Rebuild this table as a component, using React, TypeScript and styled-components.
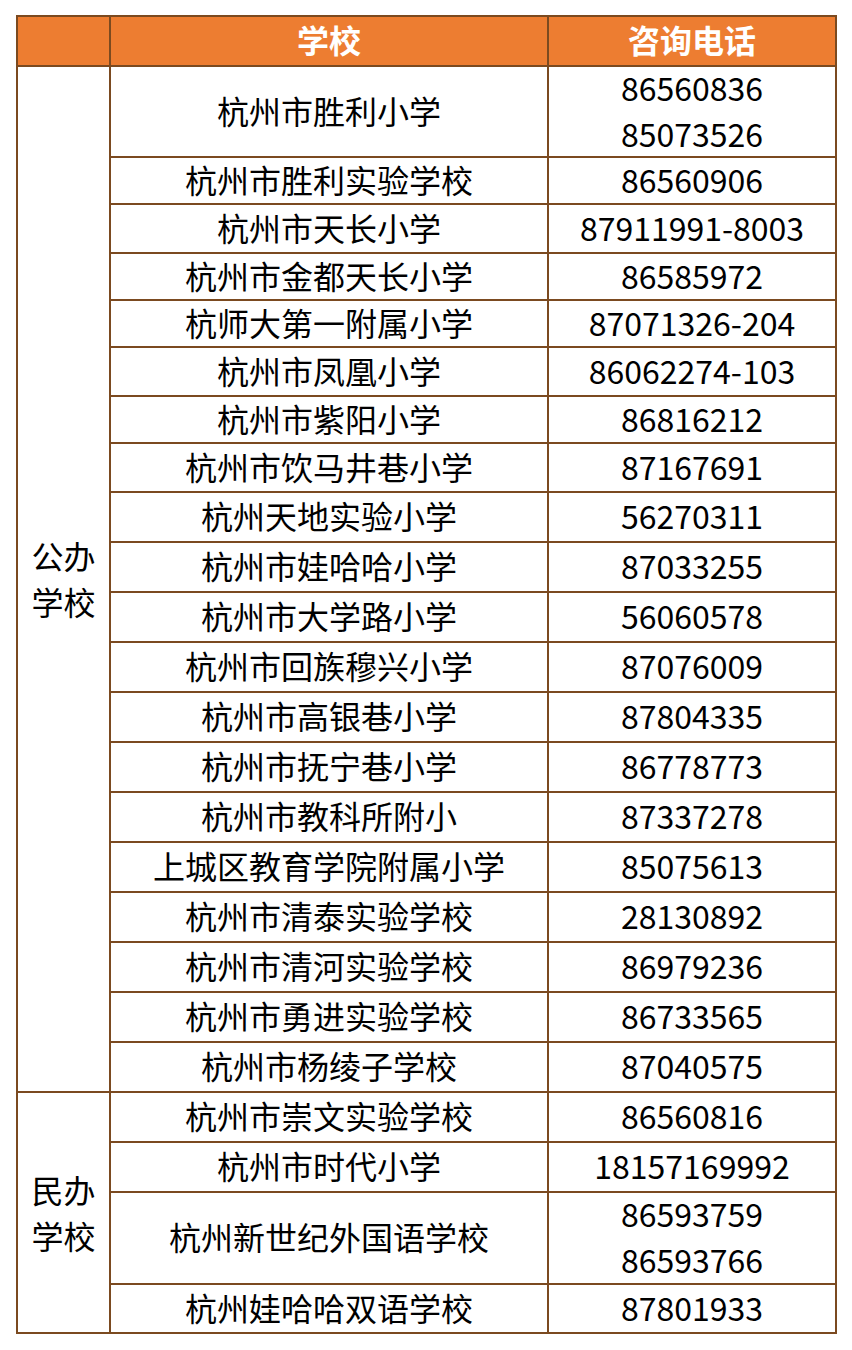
import React from "react";
import styled, { createGlobalStyle } from "styled-components";

const GlobalStyle = createGlobalStyle`
  html, body {
    margin: 0;
    padding: 0;
    background: #ffffff;
  }
  body {
    font-family: "Microsoft YaHei", "Noto Sans CJK SC", "Noto Sans", sans-serif;
  }
`;

const LINE = "#7b4a20";

const Page = styled.div`
  padding: 15px 0 0 16px;
`;

const Grid = styled.div<{ $rows: number[] }>`
  display: grid;
  width: 821px;
  box-sizing: border-box;
  grid-template-columns: 93px 438px 288px;
  grid-template-rows: ${(p) => p.$rows.map((r) => `${r}px`).join(" ")};
  border-left: 2px solid ${LINE};
  border-top: 2px solid ${LINE};
`;

const Cell = styled.div<{ $span?: number }>`
  box-sizing: border-box;
  display: flex;
  flex-direction: column;
  align-items: center;
  justify-content: center;
  border-right: 2px solid ${LINE};
  border-bottom: 2px solid ${LINE};
  padding-bottom: 4px;
  font-size: 32px;
  line-height: 46px;
  color: #000;
  text-align: center;
  white-space: nowrap;
  ${(p) => (p.$span ? `grid-row: span ${p.$span};` : "")}
`;

const HeadCell = styled(Cell)`
  background: #ed7d31;
  color: #ffffff;
  font-weight: 700;
  padding-bottom: 4px;
`;

const GroupCell = styled(Cell)`
  padding-bottom: 2px;
`;

type Row = { name: string; phones: string[]; h: number };

const publicRows: Row[] = [
  { name: "杭州市胜利小学", phones: ["86560836", "85073526"], h: 91 },
  { name: "杭州市胜利实验学校", phones: ["86560906"], h: 47 },
  { name: "杭州市天长小学", phones: ["87911991-8003"], h: 49 },
  { name: "杭州市金都天长小学", phones: ["86585972"], h: 47 },
  { name: "杭师大第一附属小学", phones: ["87071326-204"], h: 47 },
  { name: "杭州市凤凰小学", phones: ["86062274-103"], h: 49 },
  { name: "杭州市紫阳小学", phones: ["86816212"], h: 47 },
  { name: "杭州市饮马井巷小学", phones: ["87167691"], h: 49 },
  { name: "杭州天地实验小学", phones: ["56270311"], h: 50 },
  { name: "杭州市娃哈哈小学", phones: ["87033255"], h: 50 },
  { name: "杭州市大学路小学", phones: ["56060578"], h: 50 },
  { name: "杭州市回族穆兴小学", phones: ["87076009"], h: 50 },
  { name: "杭州市高银巷小学", phones: ["87804335"], h: 50 },
  { name: "杭州市抚宁巷小学", phones: ["86778773"], h: 50 },
  { name: "杭州市教科所附小", phones: ["87337278"], h: 50 },
  { name: "上城区教育学院附属小学", phones: ["85075613"], h: 50 },
  { name: "杭州市清泰实验学校", phones: ["28130892"], h: 50 },
  { name: "杭州市清河实验学校", phones: ["86979236"], h: 50 },
  { name: "杭州市勇进实验学校", phones: ["86733565"], h: 50 },
  { name: "杭州市杨绫子学校", phones: ["87040575"], h: 50 },
];

const privateRows: Row[] = [
  { name: "杭州市崇文实验学校", phones: ["86560816"], h: 50 },
  { name: "杭州市时代小学", phones: ["18157169992"], h: 50 },
  { name: "杭州新世纪外国语学校", phones: ["86593759", "86593766"], h: 92 },
  { name: "杭州娃哈哈双语学校", phones: ["87801933"], h: 49 },
];

const groups = [
  { label: ["公办", "学校"], rows: publicRows },
  { label: ["民办", "学校"], rows: privateRows },
];

export default function App() {
  const heights = [50, ...publicRows.map((r) => r.h), ...privateRows.map((r) => r.h)];
  return (
    <>
      <GlobalStyle />
      <Page>
        <Grid $rows={heights}>
          <HeadCell />
          <HeadCell>学校</HeadCell>
          <HeadCell>咨询电话</HeadCell>
          {groups.map((g) => (
            <React.Fragment key={g.label.join("")}>
              <GroupCell $span={g.rows.length} style={{ gridColumn: 1 }}>
                {g.label.map((l) => (
                  <div key={l}>{l}</div>
                ))}
              </GroupCell>
              {g.rows.map((r) => (
                <React.Fragment key={r.name}>
                  <Cell style={{ gridColumn: 2 }}>{r.name}</Cell>
                  <Cell style={{ gridColumn: 3 }}>
                    {r.phones.map((p) => (
                      <div key={p}>{p}</div>
                    ))}
                  </Cell>
                </React.Fragment>
              ))}
            </React.Fragment>
          ))}
        </Grid>
      </Page>
    </>
  );
}
